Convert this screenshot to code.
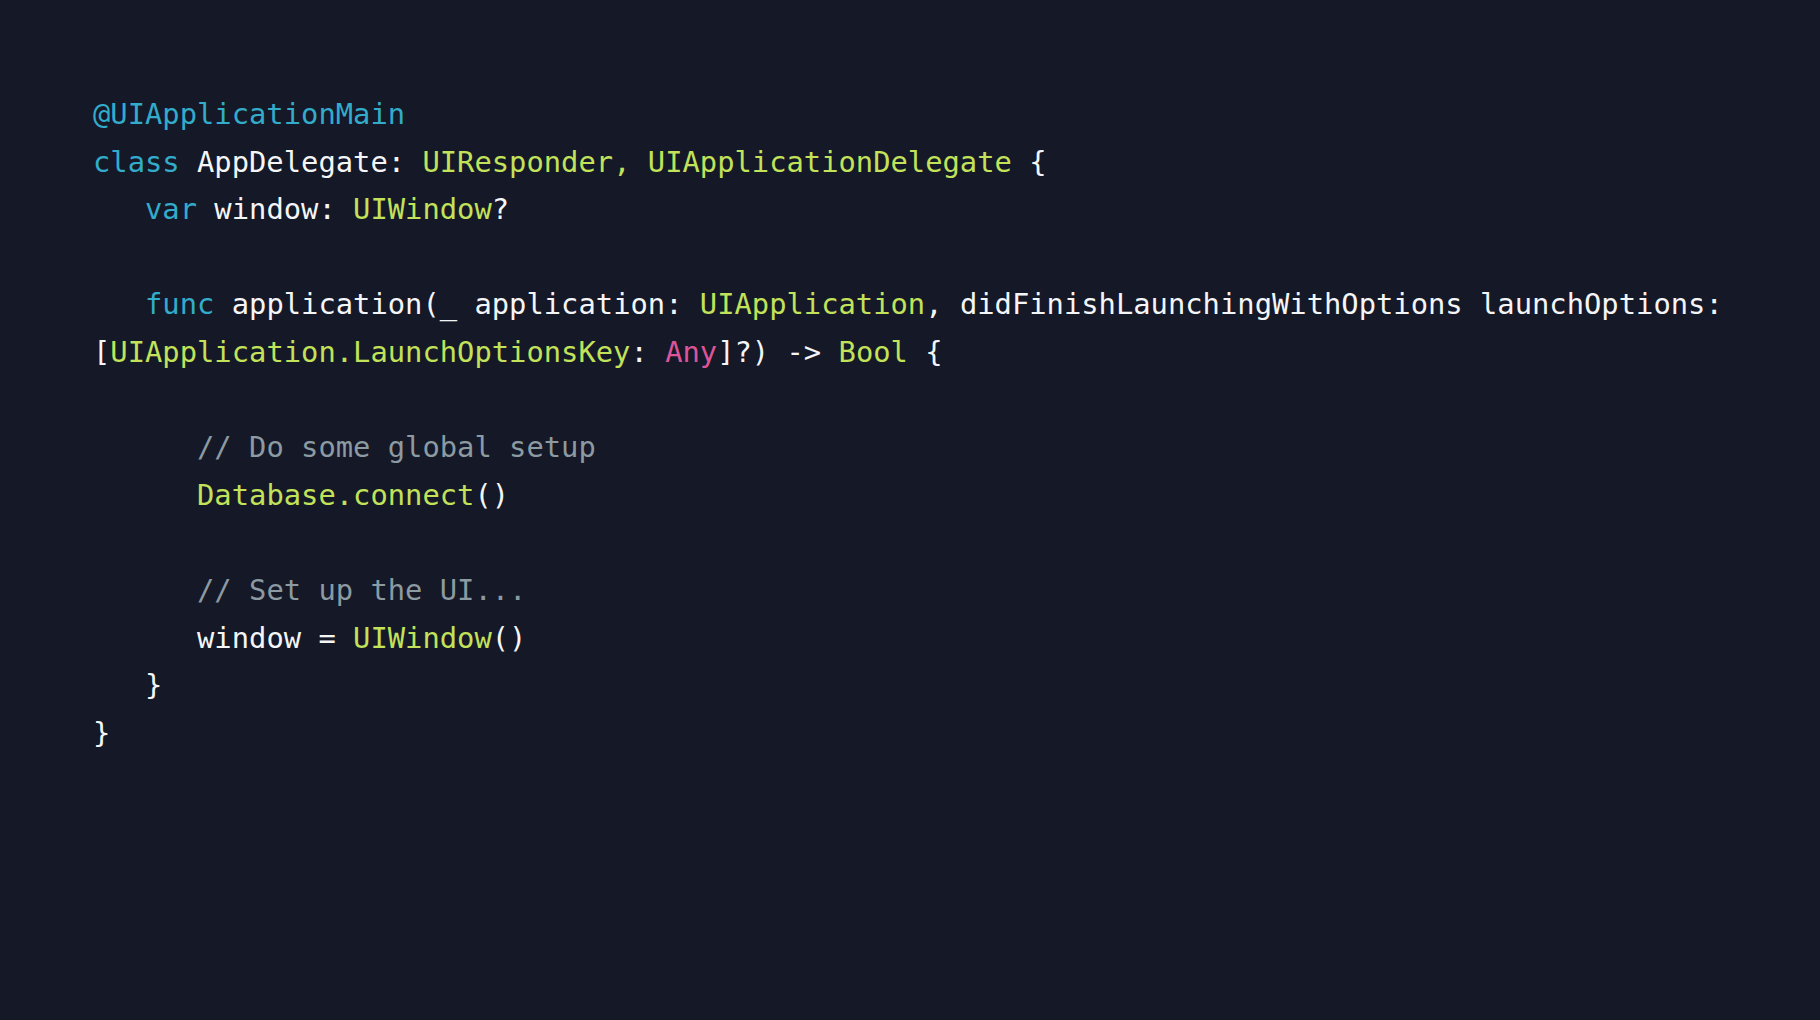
type Tok = [string, string];

const KW = "text-[#32acca]";
const TY = "text-[#c2e25a]";
const TX = "text-[#f4f5f7]";
const CM = "text-[#8c9aa1]";
const PK = "text-[#dd5598]";

const lines: Tok[][] = [
  [["@UIApplicationMain", KW]],
  [
    ["class", KW],
    [" AppDelegate: ", TX],
    ["UIResponder, UIApplicationDelegate", TY],
    [" {", TX],
  ],
  [
    ["   ", TX],
    ["var", KW],
    [" window: ", TX],
    ["UIWindow", TY],
    ["?", TX],
  ],
  [],
  [
    ["   ", TX],
    ["func", KW],
    [" application(_ application: ", TX],
    ["UIApplication", TY],
    [", didFinishLaunchingWithOptions launchOptions: [", TX],
    ["UIApplication.LaunchOptionsKey", TY],
    [": ", TX],
    ["Any", PK],
    ["]?) -> ", TX],
    ["Bool", TY],
    [" {", TX],
  ],
  [],
  [
    ["      ", TX],
    ["// Do some global setup", CM],
  ],
  [
    ["      ", TX],
    ["Database.connect", TY],
    ["()", TX],
  ],
  [],
  [
    ["      ", TX],
    ["// Set up the UI...", CM],
  ],
  [
    ["      window = ", TX],
    ["UIWindow", TY],
    ["()", TX],
  ],
  [["   }", TX]],
  [["}", TX]],
];

export default function App() {
  return (
    <div className="min-h-screen w-full bg-[#151827] px-[93px] pt-[91px]">
      <pre className="whitespace-pre-wrap font-['DejaVu_Sans_Mono',monospace] text-[28.8px] leading-[47.6px] antialiased">
        {lines.map((line, i) => (
          <div key={i} className="min-h-[47.6px]">
            {line.map(([text, cls], j) => (
              <span key={j} className={cls}>
                {text}
              </span>
            ))}
          </div>
        ))}
      </pre>
    </div>
  );
}
